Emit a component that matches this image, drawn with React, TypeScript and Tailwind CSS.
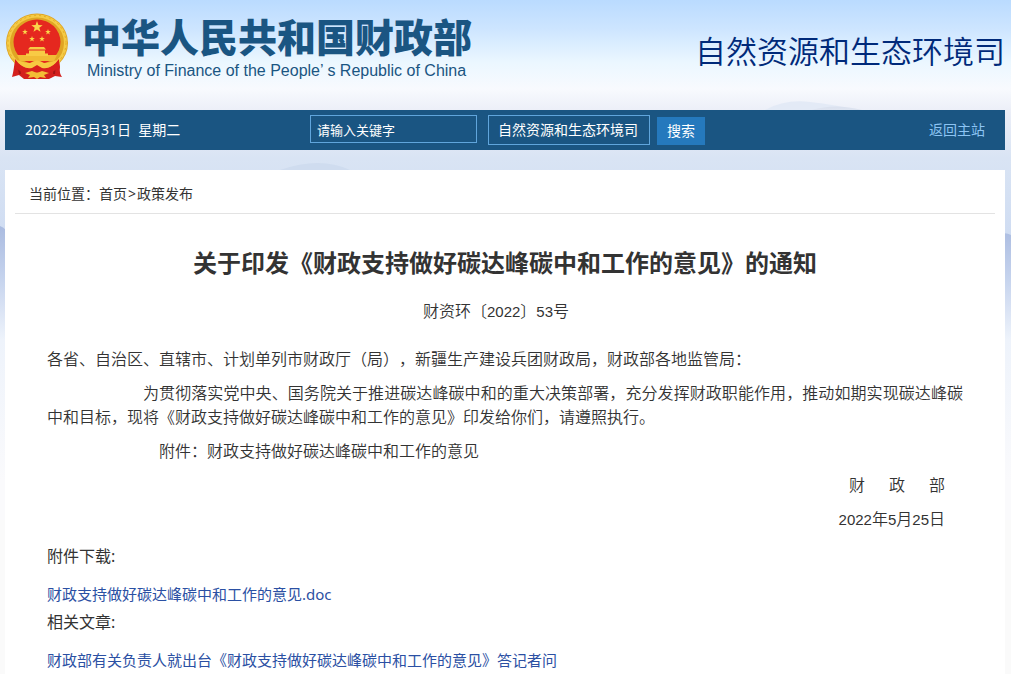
import { ReactNode } from "react";

type Department = {
    value: string;
    label: string;
};

const departments: Department[] = [{ value: "zyhj", label: "自然资源和生态环境司" }];

function Star({ x, y, r }: { x: number; y: number; r: number }) {
    return (
        <polygon
            transform={`translate(${x} ${y}) scale(${r})`}
            points="0,-1 .235,-.324 .951,-.309 .38,.124 .588,.809 0,.4 -.588,.809 -.38,.124 -.951,-.309 -.235,-.324"
            fill="#fbd64a"
        />
    );
}

function Emblem() {
    return (
        <svg viewBox="0 0 64 68" className="h-[68px] w-16 shrink-0" role="img" aria-label="国徽">
            <path d="M10 46 L54 46 L55 55 Q54 61 57 65 L50 64 L44 67 L19 67 L14 63 L7 65 Q9 58 10 46Z" fill="#d3201d" />
            <path d="M13 52 L15 62 M50 52 L49 62" stroke="#a31515" strokeWidth="2" />
            <ellipse cx="32" cy="31" rx="31" ry="29.500" fill="#e0a524" />
            <ellipse cx="32" cy="31" rx="28.500" ry="27" fill="none" stroke="#f5cb45" strokeWidth="3" />
            <ellipse cx="32" cy="31" rx="29" ry="27.500" fill="none" stroke="#e3ac2a" strokeWidth="1" strokeDasharray="2 3" />
            <ellipse cx="32" cy="30" rx="23.500" ry="22.500" fill="#e5281f" />
            <Star x={32} y={15} r={6} />
            <Star x={20} y={20} r={3} />
            <Star x={43} y={20} r={3} />
            <Star x={27} y={27} r={3} />
            <Star x={37} y={27} r={3} />
            <path d="M25 35h14l2 2.500H23z M24 38.500h16v3h3V45H21v-3.500h3z" fill="#f8cb45" />
            <path d="M12 43h9v1h22v-1h9l-3 6H15z" fill="#f1bb35" />
            <path d="M10 47 Q18 58 26 54 Q32 49 38 54 Q46 58 54 47 L54 56 L47 60 L17 60 L10 56Z" fill="#d8201c" />
            <path
                d="M12 48 Q20 51 25 51 Q32 46 39 51 Q44 51 52 48 Q46 58 37 56 L32 53 L27 56 Q18 58 12 48Z"
                fill="#f7c940"
            />
            <path d="M20 61 L27 59 L32 61 L37 59 L44 61 L39 63 L41 66 L35 65 L32 67 L29 65 L23 66 L25 63Z" fill="#f3bd35" />
        </svg>
    );
}

function Backdrop() {
    return (
        <svg
            className="absolute inset-x-0 top-0 -z-10 h-[520px] w-full"
            viewBox="0 0 1011 520"
            preserveAspectRatio="none"
            aria-hidden="true"
        >
            <defs>
                <linearGradient id="sky" x1="0" y1="0" x2="0" y2="240" gradientUnits="userSpaceOnUse">
                    <stop offset="0" stopColor="#badbff" />
                    <stop offset=".12" stopColor="#cde5ff" />
                    <stop offset=".26" stopColor="#ebf7ff" />
                    <stop offset=".37" stopColor="#f8fafe" />
                    <stop offset=".46" stopColor="#eceff8" />
                    <stop offset=".66" stopColor="#d9e4f4" />
                    <stop offset="1" stopColor="#cfdcf2" />
                </linearGradient>
                <linearGradient id="ridge" x1="0" y1="225" x2="0" y2="480" gradientUnits="userSpaceOnUse">
                    <stop offset="0" stopColor="#aabbe0" />
                    <stop offset=".2" stopColor="#c4d2ed" />
                    <stop offset=".45" stopColor="#eef3fb" />
                    <stop offset="1" stopColor="#fafafc" />
                </linearGradient>
                <linearGradient id="haze" x1="0" y1="100" x2="0" y2="112" gradientUnits="userSpaceOnUse">
                    <stop offset="0" stopColor="#d3daea" />
                    <stop offset="1" stopColor="#e0e6f2" />
                </linearGradient>
            </defs>
            <rect width="1011" height="240" fill="url(#sky)" />
            <path d="M765 110 Q785 99 810 102 Q835 104 860 112Z" fill="#e3eaf6" />
            <path d="M812 110 Q835 103 862 110Z" fill="url(#haze)" />
            <path d="M280 170 Q320 156 350 170Z" fill="#cfdcef" />
            <path d="M0 226 Q6 228 12 238 V240 H1000 V234 Q1006 232 1011 235 V520 H0Z" fill="url(#ridge)" />
        </svg>
    );
}

function Paragraph({ children, className = "" }: { children: ReactNode; className?: string }) {
    return <p className={`mb-[10px] text-justify leading-6 ${className}`}>{children}</p>;
}

// 正文中的数字
function Num({ children }: { children: ReactNode }) {
    return <span className="font-['Liberation_Sans',sans-serif] text-[15px]">{children}</span>;
}

function Header() {
    return (
        <header className="flex h-[110px] items-start justify-between">
            <div className="flex gap-[13px] pt-3">
                <Emblem />
                <div className="whitespace-nowrap text-[#1a5582]">
                    <p className="text-[39px] leading-[50px] font-black">中华人民共和国财政部</p>
                    <p className="pl-[5px] font-['Liberation_Sans',sans-serif] text-base leading-[18px]">
                        Ministry of Finance of the People’ s Republic of China
                    </p>
                </div>
            </div>
            <h2 className="pt-7 text-[31px] leading-[46px] font-[350] whitespace-nowrap text-[#002a7a]">
                自然资源和生态环境司
            </h2>
        </header>
    );
}

function SearchBar() {
    return (
        <nav className="flex h-10 items-start bg-[#1a5582] px-5 text-sm whitespace-nowrap text-white">
            <p className="w-[285px] leading-10">2022年05月31日&nbsp; 星期二</p>
            <form className="flex items-start pt-[5px]" onSubmit={(e) => e.preventDefault()}>
                <input
                    type="text"
                    aria-label="关键字"
                    defaultValue="请输入关键字"
                    className="h-7 w-[167px] border border-[#60a5dc] bg-transparent px-[6px] text-[13px]"
                />
                <select
                    aria-label="司局"
                    className="ml-[11px] h-[30px] w-[162px] appearance-none border border-[#60a5dc] bg-[#1a5582] px-[9px]"
                >
                    {departments.map((item) => (
                        <option key={item.value} value={item.value}>
                            {item.label}
                        </option>
                    ))}
                </select>
                <button type="submit" className="mt-[2px] ml-[7px] h-7 w-12 bg-[#2579bd]">
                    搜索
                </button>
            </form>
            <a href="#" className="ml-auto leading-10 text-[#8cc4f3]">
                返回主站
            </a>
        </nav>
    );
}

function App() {
    return (
        <div className="relative isolate flex min-h-screen flex-col bg-[#fafafa] pr-[6px] pl-[5px] font-['Noto_Sans','Noto_Sans_CJK_SC',sans-serif] text-[#333]">
            <Backdrop />
            <div className="mx-auto flex w-full max-w-[1000px] grow flex-col">
                <Header />
                <SearchBar />
                <main className="mt-5 grow bg-white px-[10px]">
                    <div className="border-b border-[#e3e3e3] pt-1 pl-[14px] text-sm leading-[39px]">
                        <span>当前位置：</span>
                        <a href="#">首页</a>
                        <span className="px-px">&gt;</span>
                        <a href="#">政策发布</a>
                    </div>
                    <article className="px-8 pt-[31px]">
                        <h1 className="text-center text-2xl leading-9 font-bold">
                            关于印发《财政支持做好碳达峰碳中和工作的意见》的通知
                        </h1>
                        <div className="pt-[17px] font-['Noto_Sans_CJK_SC',sans-serif] font-[350] [text-spacing-trim:space-all]">
                            <p className="mb-[22px] pr-[18px] text-center leading-6">
                                财资环〔<Num>2022</Num>〕<Num>53</Num>号
                            </p>
                            <Paragraph>
                                各省、自治区、直辖市、计划单列市财政厅（局），新疆生产建设兵团财政局，财政部各地监管局：
                            </Paragraph>
                            <Paragraph className="indent-24">
                                为贯彻落实党中央、国务院关于推进碳达峰碳中和的重大决策部署，充分发挥财政职能作用，推动如期实现碳达峰碳中和目标，现将《财政支持做好碳达峰碳中和工作的意见》印发给你们，请遵照执行。
                            </Paragraph>
                            <Paragraph className="indent-28">附件：财政支持做好碳达峰碳中和工作的意见</Paragraph>
                            <p className="mb-[10px] flex justify-end gap-6 pr-[18px] leading-6">
                                <span>财</span>
                                <span>政</span>
                                <span>部</span>
                            </p>
                            <p className="mb-[10px] pr-[18px] text-right leading-6">
                                <Num>2022</Num>年<Num>5</Num>月<Num>25</Num>日
                            </p>
                        </div>
                        <section className="leading-7">
                            <h3 className="mb-[10px]">附件下载:</h3>
                            <a href="#" className="block text-[15px] text-[#2b50a3]">
                                财政支持做好碳达峰碳中和工作的意见.doc
                            </a>
                            <h3 className="mb-[10px]">相关文章:</h3>
                            <a href="#" className="block text-[15px] text-[#2b50a3]">
                                财政部有关负责人就出台《财政支持做好碳达峰碳中和工作的意见》答记者问
                            </a>
                        </section>
                    </article>
                </main>
            </div>
        </div>
    );
}
export default App;
